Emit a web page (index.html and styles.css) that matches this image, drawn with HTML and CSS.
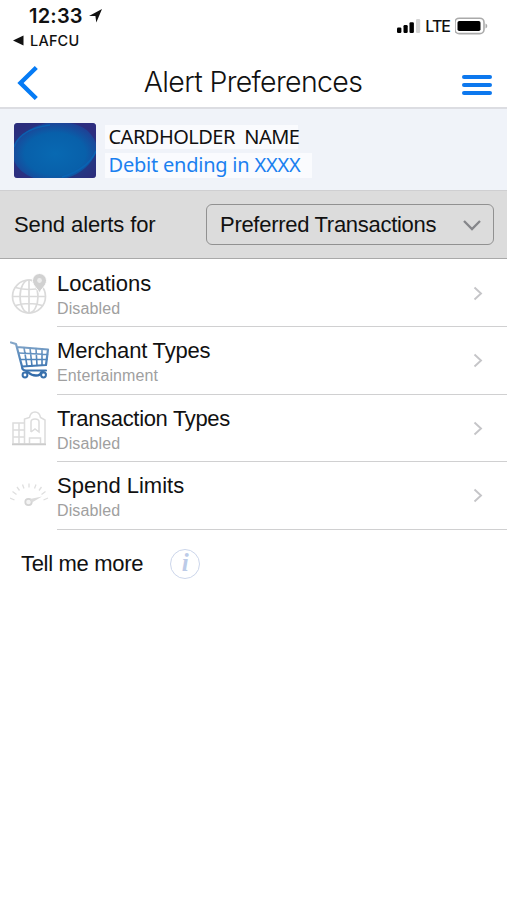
FILE: index.html
```html
<!DOCTYPE html>
<html lang="en">
<head>
<meta charset="utf-8">
<title>Alert Preferences</title>
<link rel="stylesheet" href="styles.css">
</head>
<body>
<header class="top">
  <div class="status">
    <div class="status-left">
      <div class="clock"><span class="time">12:33</span>
        <svg width="15" height="15" viewBox="0 0 15 15"><path d="M14 1 8.300 14.500 7.400 8 1 8Z" fill="#111"/></svg>
      </div>
      <div class="back-app"><svg width="11" height="11" viewBox="0 0 11 11"><path d="M0 5.500 10.500.5v10Z" fill="#111"/></svg><span class="app">LAFCU</span></div>
    </div>
    <div class="status-right">
      <svg width="24" height="16" viewBox="0 0 24 16"><g fill="#000"><rect x="0" y="9.500" width="4.400" height="5.500" rx="1.200"/><rect x="6.500" y="7" width="4.200" height="8" rx="1.200"/><rect x="12.500" y="4.200" width="4.400" height="10.800" rx="1.200"/></g><rect x="19" y="1" width="4.200" height="14" rx="1.200" fill="#d4d4d4"/></svg>
      <span class="lte">LTE</span>
      <svg width="34" height="18" viewBox="0 0 34 18"><rect x="0" y="1.200" width="29" height="15.400" rx="4.200" fill="#fff" stroke="#aaa" stroke-width="1.600"/><rect x="2.500" y="4" width="23" height="10" rx="1.800"/><path d="M30.500 6.500q1.800.7 1.800 2.500t-1.800 2.500Z" fill="#aaa"/></svg>
    </div>
  </div>
  <nav class="nav">
    <svg width="22" height="36" viewBox="0 0 22 36"><path d="M19.300 3.500 3.500 19l15.800 15.500" fill="none" stroke="#057bf5" stroke-width="4.400"/></svg>
    <h1 class="title"><span>Alert Preferences</span></h1>
    <div class="menu"><i></i><i></i><i></i></div>
  </nav>
</header>

<section class="card-bar">
  <svg class="card" width="82" height="55" viewBox="0 0 82 55">
    <defs><radialGradient id="blue" cx=".5" cy=".55" r=".62"><stop offset="0" stop-color="#0869b2"/><stop offset=".6" stop-color="#0860aa"/><stop offset="1" stop-color="#253a90"/></radialGradient>
    <clipPath id="edge"><rect width="82" height="55" rx="3.500"/></clipPath></defs>
    <g clip-path="url(#edge)"><rect width="82" height="56" fill="url(#blue)"/>
    <path d="M0 0h32Q8 6 0 24ZM82 56H50q24-7 32-26Z" fill="#30246f" opacity=".6"/>
    <path d="M0 24Q6 6 36 2M82 28Q74 46 48 54" fill="none" stroke="#0867b7" stroke-width="1.600" opacity=".8"/>
    <path d="M56 0q19 3 26 20V0ZM0 38q5 12 22 18H0Z" fill="#302878" opacity=".7"/></g>
  </svg>
  <div class="holder">
    <div class="holder-name"><span>CARDHOLDER&nbsp; NAME</span></div>
    <div class="holder-card"><span>Debit ending in XXXX</span></div>
  </div>
</section>

<section class="filter">
  <span class="send">Send alerts for</span>
  <div class="select"><span>Preferred Transactions</span>
    <svg width="20" height="14" viewBox="0 0 20 14"><path d="m2 3 8 8 8-8" fill="none" stroke="#85868a" stroke-width="2.300"/></svg>
  </div>
</section>

<main class="list">
  <div class="row">
    <div class="icon"><svg width="42" height="44" viewBox="0 0 42 44"><g fill="none" stroke="#dadada" stroke-width="1.700"><circle cx="19" cy="24.500" r="16.500"/><ellipse cx="19" cy="24.500" rx="9" ry="16.500"/><path d="M19 8v33M2.500 24.500h33M5.500 15.500q13.500 4 27 0M5.500 33.500q13.500-4 27 0"/></g><path d="M29.500 21.500c-1-4.500-7-7.500-7-13a7 7 0 0 1 14 0c0 5.500-6 8.500-7 13Z" fill="#d1d1d1" stroke="#fff"/><circle cx="29.500" cy="8.500" r="2.400" fill="#ececec"/></svg></div>
    <div class="body"><div class="label"><span>Locations</span></div><div class="sub"><span>Disabled</span></div></div>
    <div class="chev"><svg width="12" height="16" viewBox="0 0 12 16"><path d="m2.500 1.500 6.500 6-6.500 6" fill="none" stroke="#c5c5c8" stroke-width="1.900"/></svg></div>
  </div>
  <div class="row">
    <div class="icon"><svg width="42" height="44" viewBox="0 0 42 44"><defs><linearGradient id="cart" x1="0" y1="0" x2="0" y2="40" gradientUnits="userSpaceOnUse"><stop offset="0" stop-color="#92afcc"/><stop offset=".5" stop-color="#5286bb"/><stop offset="1" stop-color="#2c65a6"/></linearGradient></defs><g fill="none" stroke="url(#cart)" stroke-width="1.600" stroke-linejoin="round" stroke-linecap="round"><path d="M1 3.500 6 5l6 22.500 24-1.500 2-15.500L7 8" stroke-width="2.200"/><path d="M9 14l28.500 1.500M10.500 20.500H37M14 8.500l3 18.500M20 9l2 18M26 9.500l1 17M32 10v16"/><path d="M12 27.500q0 4 4 4h20" stroke-width="2.200"/><path d="M15 35q1-3 3.500-1.500 3 3 7.500 3t5-3q2.500-1.500 4.500 1.500" stroke-width="2.300"/></g><g fill="#fff" stroke="#3870ac" stroke-width="2"><circle cx="15" cy="36" r="2.400"/><circle cx="33.500" cy="36" r="2.400"/></g></svg></div>
    <div class="body"><div class="label merchant"><span>Merchant Types</span></div><div class="sub"><span>Entertainment</span></div></div>
    <div class="chev"><svg width="12" height="16" viewBox="0 0 12 16"><path d="m2.500 1.500 6.500 6-6.500 6" fill="none" stroke="#c5c5c8" stroke-width="1.900"/></svg></div>
  </div>
  <div class="row">
    <div class="icon"><svg width="42" height="44" viewBox="0 0 42 44"><g fill="none" stroke="#dcdcdc" stroke-width="1.500"><path d="M14.500 37H3V16h11.500M3 23h11.500M3 30h11.500M9 16v21"/><path d="M14.500 37V12l5-1.500q1-5.500 5.500-5.500t5.500 5.500L35 13v24Z"/><path d="M19.500 37v-6h11v6M21 25V15q0-3 4-3t4 3v10l-4-3-4 3"/></g><path d="M2 37.300h34" stroke="#cccccc" stroke-width="1.800"/></svg></div>
    <div class="body"><div class="label transaction"><span>Transaction Types</span></div><div class="sub"><span>Disabled</span></div></div>
    <div class="chev"><svg width="12" height="16" viewBox="0 0 12 16"><path d="m2.500 1.500 6.500 6-6.500 6" fill="none" stroke="#c5c5c8" stroke-width="1.900"/></svg></div>
  </div>
  <div class="row">
    <div class="icon"><svg width="42" height="44" viewBox="0 0 42 44"><g fill="none" stroke="#dfdfdf" stroke-width="1.300"><path d="m0 24 4.500 2M2.500 17.500l4 3M7 13l2.500 3.500M12.500 10.500l1.500 4M19 9.500v4M26 10.500l-1.500 4M31.500 13 29 16.500M35.500 17.500l-4 3M38 24l-4.500 2"/></g><circle cx="18.500" cy="28" r="3.200" fill="#f4f4f4" stroke="#d4d4d4" stroke-width="1.800"/><path d="m20 25 12-2.500-10 6Z" fill="#dcdcdc"/></svg></div>
    <div class="body"><div class="label"><span>Spend Limits</span></div><div class="sub"><span>Disabled</span></div></div>
    <div class="chev"><svg width="12" height="16" viewBox="0 0 12 16"><path d="m2.500 1.500 6.500 6-6.500 6" fill="none" stroke="#c5c5c8" stroke-width="1.900"/></svg></div>
  </div>
</main>

<footer class="more"><span>Tell me more</span><span class="info">i</span></footer>
</body>
</html>
```
FILE: styles.css
```css
* { box-sizing: border-box; }
body { margin: 0; background: #fff; color: #111; font-family: "Liberation Sans", Arial, sans-serif; font-size: 22px; }
svg { display: block; flex: none; }
span { white-space: nowrap; }
.top { height: 109px; border-bottom: 2px solid #dcdde2; }
.status { height: 56px; display: flex; justify-content: space-between; padding: 3px 18px 0 13px; font-family: Inter, sans-serif; }
.clock { display: flex; align-items: center; gap: 5px; height: 25px; padding-left: 16px; font-size: 20px; font-weight: 600; }
.time { letter-spacing: .2px; }
.back-app { display: flex; align-items: center; gap: 6px; height: 25px; font-size: 14.500px; font-weight: 500; }
.app { letter-spacing: .2px; }
.status-right { display: flex; align-items: center; height: 45px; gap: 4px; }
.lte { font-size: 16px; font-weight: 500; letter-spacing: -1px; margin-right: 1px; }
.nav { display: flex; align-items: center; justify-content: space-between; height: 52px; padding: 0 15px 0 17px; }
.title { margin: 0 0 0 5px; font: 300 28.500px/34px Inter, sans-serif; letter-spacing: -.66px; }
.menu { display: grid; gap: 4px; width: 30px; margin-top: 5px; }
.menu i { height: 4px; border-radius: 2px; background: #0d78ee; }
.card-bar { height: 81px; display: flex; gap: 9px; padding: 14px 13px 0 14px; background: #f0f3f9; }
.holder { font-family: "Noto Sans", sans-serif; font-size: 20px; padding-top: 2px; }
.holder-name, .holder-card { background: #fafbfe; height: 24px; line-height: 23px; padding-left: 3.500px; }
.holder-name { width: 193px; letter-spacing: -.52px; }
.holder-card { width: 207px; height: 25px; line-height: 24px; margin-top: 4px; color: #1a80f0; letter-spacing: -.22px; }
.filter { height: 69px; display: flex; align-items: center; justify-content: space-between; padding: 0 13px 0 14px; background: #dcdcdc; border-top: 1px solid #cfcfd1; border-bottom: 1px solid #a9a9a9; }
.send { letter-spacing: -.1px; }
.select { width: 288px; height: 41px; border: 1.500px solid #919191; border-radius: 6px; display: flex; align-items: center; justify-content: space-between; padding: 0 11px 0 13px; letter-spacing: -.29px; }
.list { padding-top: .6px; }
.row { display: flex; height: 67.600px; }
.icon { width: 57px; padding: 12px 0 0 10px; flex: none; }
.body { flex: 1; border-bottom: 1.500px solid #d0d0d1; padding-top: 10px; }
.label { height: 27px; line-height: 27px; }
.merchant { letter-spacing: -.2px; }
.transaction { letter-spacing: -.33px; }
.sub { height: 22px; line-height: 23px; font-size: 16px; letter-spacing: .12px; color: #a0a0a0; }
.chev { width: 35px; padding-top: 26px; border-bottom: 1.500px solid #d0d0d1; }
.more { display: flex; align-items: center; height: 69px; padding-left: 21px; gap: 27px; letter-spacing: -.32px; }
.info { width: 30px; height: 30px; border: 1.500px solid #ccd6eb; border-radius: 50%; text-align: center; color: #bccbe8; font: italic bold 25px/26px "Liberation Serif", serif; }
```
